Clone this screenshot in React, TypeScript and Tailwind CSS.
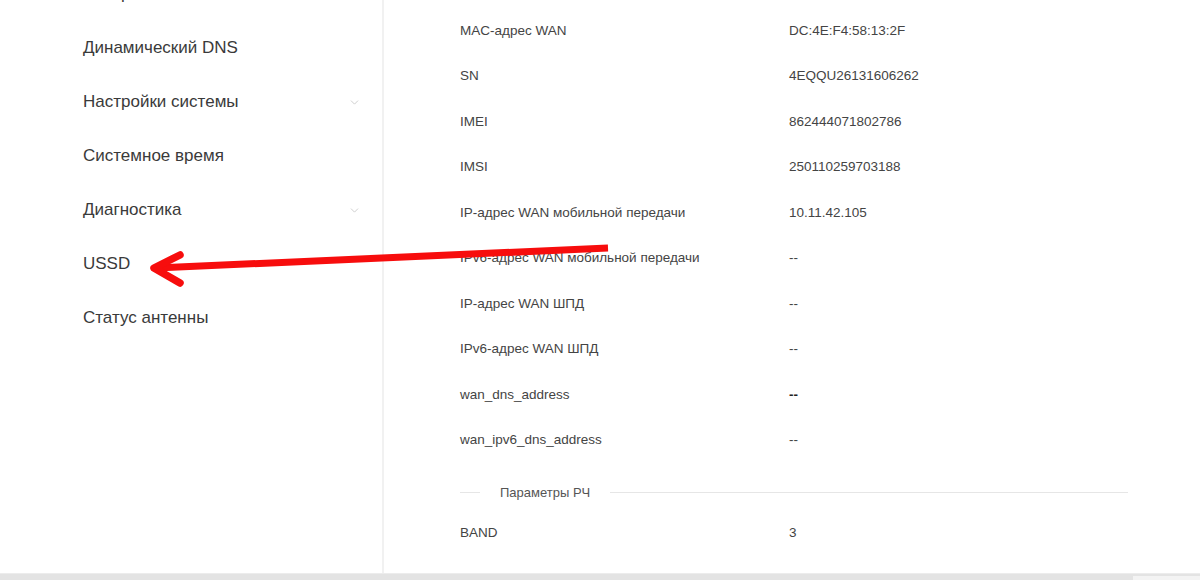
import { ChevronDown } from 'lucide-react';

type MenuItem = { title: string; sub?: boolean };

const menu: MenuItem[] = [
  { title: 'Настройки DMZ' },
  { title: 'Динамический DNS' },
  { title: 'Настройки системы', sub: true },
  { title: 'Системное время' },
  { title: 'Диагностика', sub: true },
  { title: 'USSD' },
  { title: 'Статус антенны' },
];

type Row = { label: string; value: string; strong?: boolean };

const wanInfo: Row[] = [
  { label: 'MAC-адрес WAN', value: 'DC:4E:F4:58:13:2F' },
  { label: 'SN', value: '4EQQU26131606262' },
  { label: 'IMEI', value: '862444071802786' },
  { label: 'IMSI', value: '250110259703188' },
  { label: 'IP-адрес WAN мобильной передачи', value: '10.11.42.105' },
  { label: 'IPv6-адрес WAN мобильной передачи', value: '--' },
  { label: 'IP-адрес WAN ШПД', value: '--' },
  { label: 'IPv6-адрес WAN ШПД', value: '--' },
  { label: 'wan_dns_address', value: '--', strong: true },
  { label: 'wan_ipv6_dns_address', value: '--' },
];

const rfInfo: Row[] = [
  { label: 'BAND', value: '3' },
  { label: 'Bandwidth', value: '' },
];

function InfoRow({ row }: { row: Row }) {
  return (
    <div className="flex h-[45.5px] items-center text-[13.5px] text-[#444]">
      <div className="w-[329px] shrink-0">{row.label}</div>
      <div className={row.strong ? 'text-[#222] font-bold' : ''}>{row.value}</div>
    </div>
  );
}

export default function App() {
  return (
    <div
      className="relative w-[1200px] h-[580px] overflow-hidden bg-white flex flex-col"
      style={{ fontFamily: '"Liberation Sans", Arial, sans-serif' }}
    >
      <div className="flex flex-1 min-h-0">
        {/* Sidebar menu */}
        <aside className="w-[384px] shrink-0 border-r-2 border-[#f1f1f1] overflow-hidden">
          <ul className="-mt-[33px]">
            {menu.map((m) => (
              <li
                key={m.title}
                className="h-[54px] flex items-center justify-between pl-[83px] pr-[21px] text-[17px] text-[#3a3a3a]"
              >
                <span>{m.title}</span>
                {m.sub && <ChevronDown size={13} strokeWidth={1.5} className="text-[#c4c4c4]" />}
              </li>
            ))}
          </ul>
        </aside>

        {/* Device information */}
        <main className="flex-1 overflow-hidden pl-[76px] pr-[72px] pt-[8px]">
          {wanInfo.map((r) => (
            <InfoRow key={r.label} row={r} />
          ))}
          <div className="h-[47px] flex items-end">
            <div className="h-[35px] w-full flex items-center">
              <div className="w-[20px] h-px bg-[#e6e6e6]" />
              <span className="px-[20px] text-[13px] text-[#555]">Параметры РЧ</span>
              <div className="flex-1 h-px bg-[#e6e6e6]" />
            </div>
          </div>
          {rfInfo.map((r) => (
            <InfoRow key={r.label} row={r} />
          ))}
        </main>
      </div>

      {/* Horizontal scrollbar */}
      <div className="h-[7px] shrink-0 flex border-t border-[#ececec]">
        <div className="w-[1133px] bg-[#e3e3e3]" />
        <div className="flex-1 bg-[#e3e3e3] flex flex-col">
          <div className="h-[2px]" />
          <div className="flex-1 bg-[#f3f3f3]" />
        </div>
      </div>

      {/* Red pointer arrow */}
      <svg className="absolute inset-0 pointer-events-none" width="1200" height="580">
        <line x1="608" y1="248" x2="156" y2="268" stroke="#f70d0d" strokeWidth="7" />
        <polyline
          points="180,255 154,268 180,283"
          fill="none"
          stroke="#f70d0d"
          strokeWidth="7.5"
          strokeLinejoin="round"
          strokeLinecap="round"
        />
      </svg>
    </div>
  );
}
